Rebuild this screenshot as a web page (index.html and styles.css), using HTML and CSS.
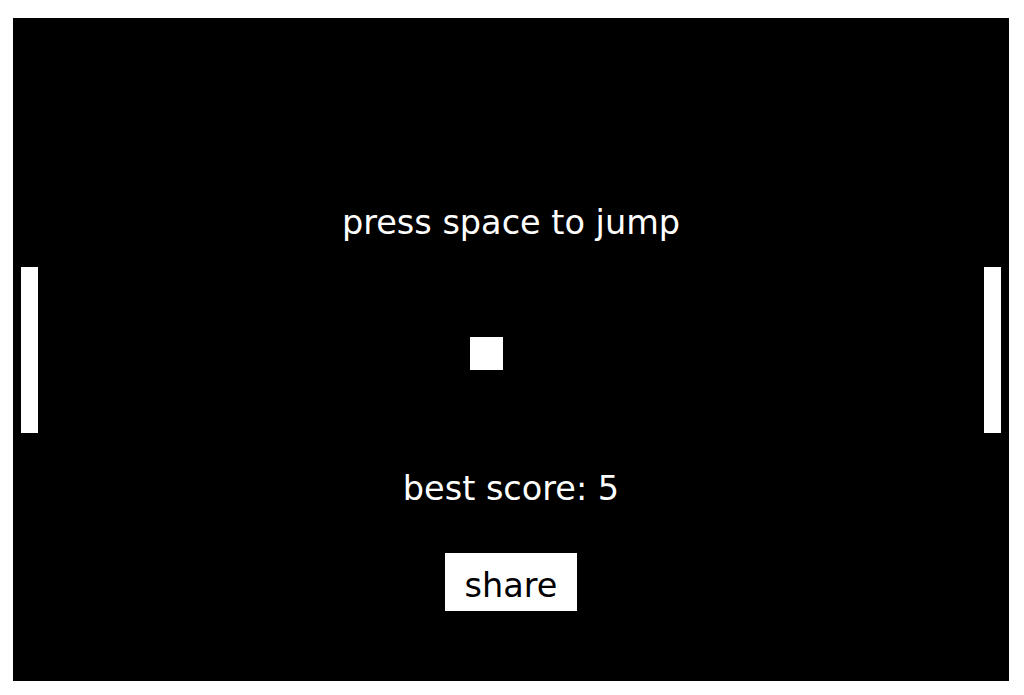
FILE: index.html
```html
<!DOCTYPE html>
<html lang="en">
<head>
<meta charset="utf-8">
<title>jump</title>
<link rel="stylesheet" href="styles.css">
</head>
<body>
<main class="game">
  <div class="paddle paddle-left"></div>
  <div class="paddle paddle-right"></div>
  <div class="player"></div>
  <p class="title">press space to jump</p>
  <p class="score">best score: 5</p>
  <button class="share" type="button">share</button>
</main>
</body>
</html>
```

FILE: styles.css
```css
html, body {
  margin: 0;
  padding: 0;
  background: #ffffff;
}

.game {
  position: relative;
  box-sizing: border-box;
  width: 996px;
  height: 663px;
  margin: 18px 0 0 13px;
  padding-top: 185px;
  background: #000000;
  display: flex;
  flex-direction: column;
  align-items: center;
  font-family: "DejaVu Sans", Verdana, sans-serif;
  font-size: 33.5px;
  line-height: 40px;
  color: #ffffff;
}

.title,
.score {
  margin: 0;
}

.score {
  margin-top: 226px;
}

.share {
  margin-top: 44px;
  box-sizing: border-box;
  width: 132px;
  height: 58px;
  padding: 13px 0 5px;
  border: none;
  border-radius: 0;
  background: #ffffff;
  color: #000000;
  font: inherit;
  line-height: 40px;
  text-align: center;
}

.paddle {
  position: absolute;
  top: 249px;
  width: 17px;
  height: 166px;
  background: #ffffff;
}

.paddle-left {
  left: 8px;
}

.paddle-right {
  left: 971px;
}

.player {
  position: absolute;
  left: 457px;
  top: 319px;
  width: 33px;
  height: 33px;
  background: #ffffff;
}
```
